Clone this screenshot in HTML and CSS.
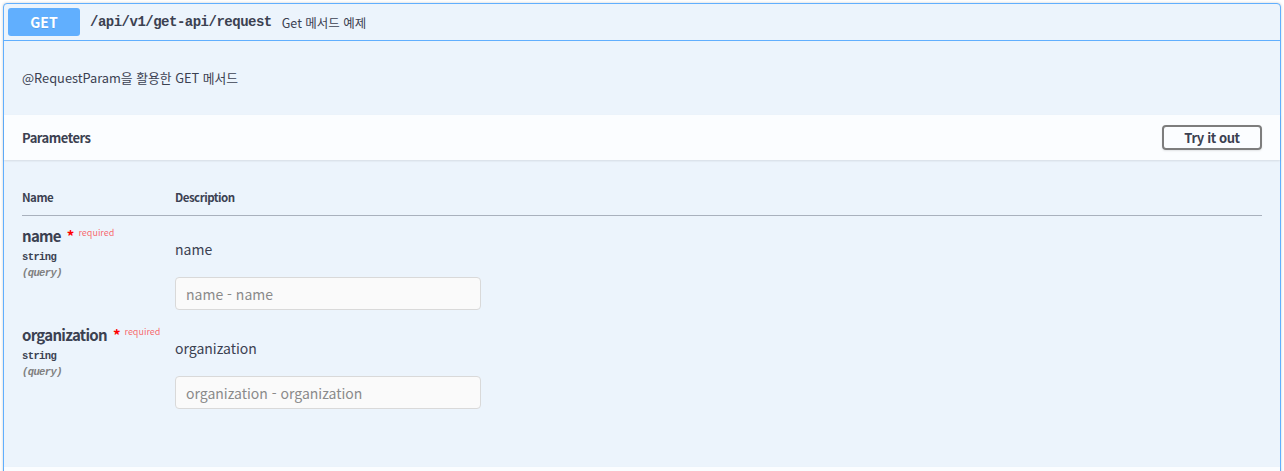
FILE: index.html
```html
<!DOCTYPE html>
<html lang="ko">
<head>
<meta charset="utf-8">
<title>GET /api/v1/get-api/request</title>
<link rel="stylesheet" href="styles.css">
</head>
<body>
<div class="page">
  <div class="opblock">
    <div class="summary">
      <span class="method">GET</span>
      <span class="path">/api/v1/get-api/request</span>
      <span class="summary-desc">Get 메서드 예제</span>
    </div>
    <div class="opblock-body">
      <div class="desc-wrap">
        <p>@RequestParam을 활용한 GET 메서드</p>
      </div>
      <div class="section-header">
        <h4 class="section-title">Parameters</h4>
        <button class="btn-try" type="button">Try it out</button>
      </div>
      <div class="table-container">
        <table class="params">
          <colgroup>
            <col class="col-name">
            <col class="col-desc">
          </colgroup>
          <thead>
            <tr>
              <th>Name</th>
              <th>Description</th>
            </tr>
          </thead>
          <tbody>
            <tr>
              <td class="cell-name">
                <div class="param-name">name<span class="star">*</span><span class="req">required</span></div>
                <div class="param-type">string</div>
                <div class="param-in">(query)</div>
              </td>
              <td class="cell-desc">
                <p class="param-desc">name</p>
                <input class="param-input" type="text" placeholder="name - name">
              </td>
            </tr>
            <tr>
              <td class="cell-name">
                <div class="param-name">organization<span class="star">*</span><span class="req">required</span></div>
                <div class="param-type">string</div>
                <div class="param-in">(query)</div>
              </td>
              <td class="cell-desc">
                <p class="param-desc">organization</p>
                <input class="param-input" type="text" placeholder="organization - organization">
              </td>
            </tr>
          </tbody>
        </table>
      </div>
      <div class="responses-header"></div>
    </div>
  </div>
</div>
</body>
</html>
```
FILE: styles.css
```css
* { box-sizing: border-box; }

body {
  margin: 0;
  background: #ffffff;
  color: #3b4151;
  font-family: "Noto Sans CJK KR", "Noto Sans", sans-serif;
}

.page {
  padding: 3px 3px 0;
}

.opblock {
  border: 1px solid #61affe;
  border-radius: 4px;
  background: #ecf4fc;
  box-shadow: 0 0 3px rgba(0, 0, 0, 0.19);
}

.summary {
  display: flex;
  align-items: center;
  padding: 4px;
  border-bottom: 1px solid #61affe;
}

.method {
  width: 72px;
  height: 28px;
  display: flex;
  align-items: center;
  justify-content: center;
  background: #61affe;
  color: #ffffff;
  border-radius: 3px;
  font-size: 14px;
  font-weight: 700;
  text-shadow: 0 1px 0 rgba(0, 0, 0, 0.1);
}

.path {
  margin-left: 10px;
  font-family: "Liberation Mono", "DejaVu Sans Mono", monospace;
  font-weight: 700;
  font-size: 14px;
  letter-spacing: -0.5px;
  color: #3b4151;
}

.summary-desc {
  margin-left: 10px;
  font-size: 12.5px;
  color: #3b4151;
}

.desc-wrap {
  padding: 15px 18px;
}

.desc-wrap p {
  margin: 12px 0 13px;
  font-size: 12.8px;
  line-height: 19px;
}

.section-header {
  height: 45px;
  padding: 0 18px;
  display: flex;
  align-items: center;
  justify-content: space-between;
  background: rgba(255, 255, 255, 0.8);
  box-shadow: 0 1px 2px rgba(0, 0, 0, 0.1);
}

.section-title {
  margin: 0;
  font-size: 13px;
  font-weight: 700;
  letter-spacing: -0.5px;
}

.btn-try {
  width: 100px;
  height: 25px;
  padding: 0;
  border: 2px solid #7d7d7d;
  border-radius: 4px;
  background: transparent;
  color: #3b4151;
  font-family: inherit;
  font-size: 13px;
  font-weight: 700;
  letter-spacing: -0.4px;
  box-shadow: 0 1px 2px rgba(0, 0, 0, 0.1);
}

.table-container {
  padding: 20px 18px 53px;
}

.params {
  width: 100%;
  border-collapse: collapse;
  table-layout: fixed;
}

.col-name {
  width: 153px;
}

.params th {
  text-align: left;
  font-size: 11.5px;
  font-weight: 700;
  letter-spacing: -0.5px;
  line-height: 16px;
  padding: 9px 0 10px;
  border-bottom: 1px solid #a9b1bd;
}

.params td {
  vertical-align: top;
  padding: 10px 0 5px;
}

.param-name {
  font-size: 15px;
  font-weight: 700;
  letter-spacing: -0.7px;
  line-height: 20px;
}

.star {
  color: #ff0000;
  margin-left: 6px;
  font-size: 15px;
  letter-spacing: 0;
}

.req {
  position: relative;
  top: -6px;
  margin-left: 4px;
  font-size: 9px;
  font-weight: 400;
  letter-spacing: 0;
  color: rgba(255, 0, 0, 0.6);
}

.param-type {
  font-family: "Liberation Mono", "DejaVu Sans Mono", monospace;
  font-size: 10.5px;
  font-weight: 700;
  letter-spacing: -0.6px;
  line-height: 16px;
}

.param-in {
  font-family: "Liberation Mono", "DejaVu Sans Mono", monospace;
  font-size: 10.5px;
  font-style: italic;
  font-weight: 700;
  letter-spacing: -0.6px;
  line-height: 16px;
  color: #808080;
}

.param-desc {
  margin: 14px 0 18px;
  font-size: 14px;
  line-height: 19px;
}

.param-input {
  display: block;
  width: 306px;
  height: 33px;
  padding: 0 10px;
  border: 1px solid #d9d9d9;
  border-radius: 4px;
  background: #fafafa;
  color: #3b4151;
  font-family: inherit;
  font-size: 14px;
}

.param-input::placeholder {
  color: #8a8a8a;
}

.responses-header {
  height: 45px;
  background: rgba(255, 255, 255, 0.8);
  box-shadow: 0 1px 2px rgba(0, 0, 0, 0.1);
}
```
